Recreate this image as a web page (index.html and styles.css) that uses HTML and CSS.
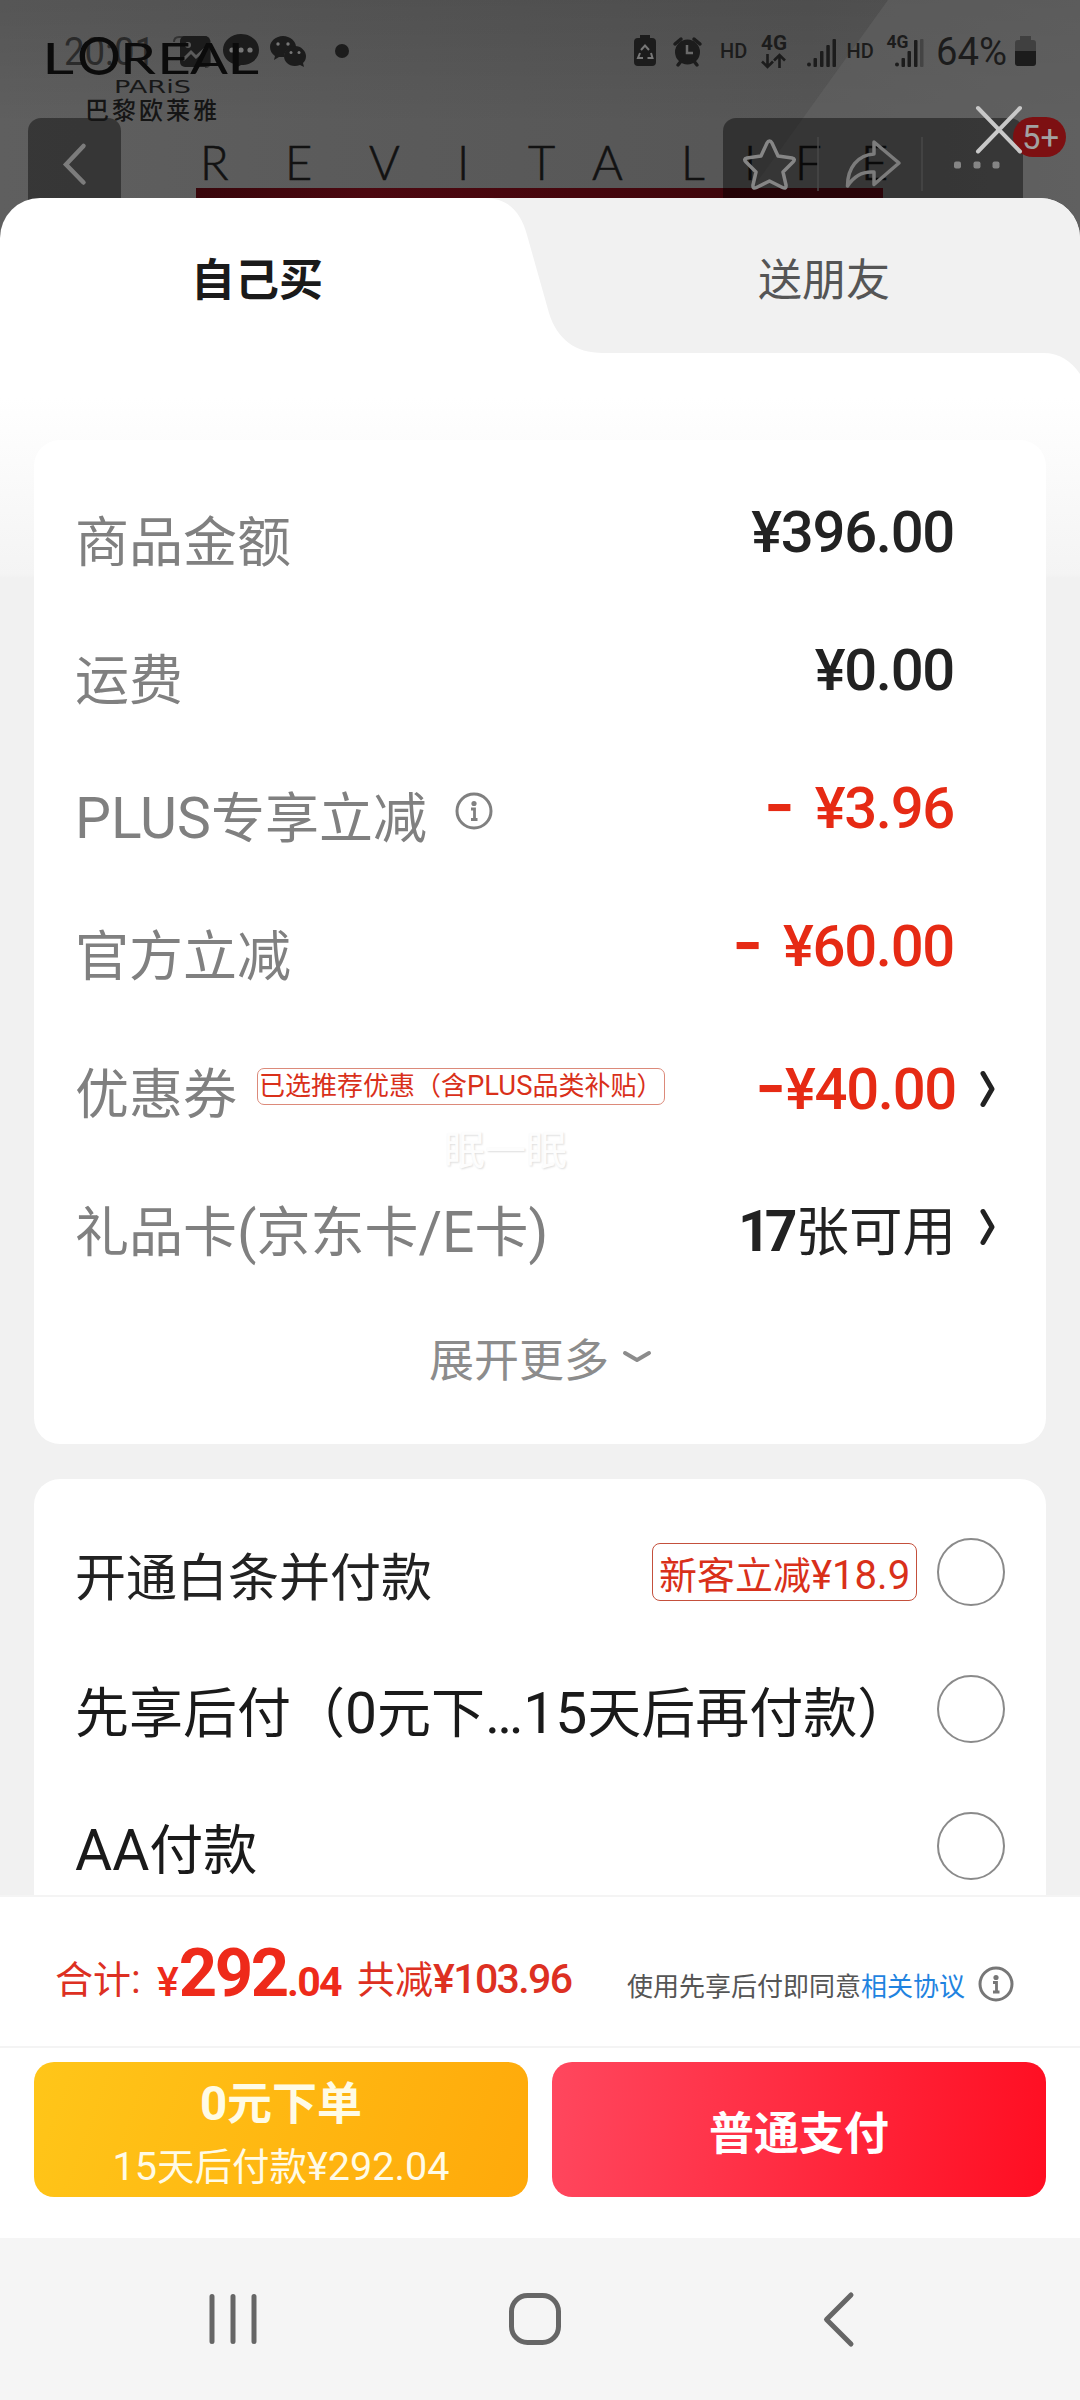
FILE: index.html
```html
<!DOCTYPE html>
<html lang="zh-CN">
<head>
<meta charset="utf-8">
<title>确认付款</title>
<link rel="stylesheet" href="styles.css">
</head>
<body>
<div class="screen">
  <svg class="poster" width="1080" height="250" viewBox="0 0 1080 250">
    <defs>
      <linearGradient id="wall" x1="0" y1="0" x2="1" y2="0"><stop offset="0" stop-color="#5f5f5f"/><stop offset=".3" stop-color="#5b5b5b"/><stop offset=".75" stop-color="#565656"/><stop offset="1" stop-color="#5c5c5c"/></linearGradient>
      <linearGradient id="shade" x1="0" y1="0" x2="0" y2="1"><stop offset="0" stop-color="#000" stop-opacity=".1"/><stop offset=".5" stop-color="#000" stop-opacity="0"/></linearGradient>
      <linearGradient id="band" x1="0" y1="0" x2="1" y2="0"><stop offset="0" stop-color="#38060b"/><stop offset=".25" stop-color="#4c0810"/><stop offset=".55" stop-color="#46060d"/><stop offset=".78" stop-color="#3f060c"/><stop offset="1" stop-color="#4a0810"/></linearGradient>
    </defs>
    <rect width="1080" height="250" fill="url(#wall)"/>
    <rect width="1080" height="250" fill="url(#shade)"/>
    <path d="M888 0H1080V250H708Z" fill="#636363" opacity=".6"/>
    <rect x="196" y="188" width="687" height="40" fill="url(#band)"/>
    <text class="poster-title" y="180" x="200 285 369 457 528 592 681 744 795 861">REVITALIFE</text>

    <!-- status bar -->
    <g fill="#1c1c1c">
      <text class="st-big" x="64" y="65" textLength="91" lengthAdjust="spacingAndGlyphs" opacity=".75">20:01</text>
      <path d="M174 42q0-5 5-5h24q7 0 7 7v18q0 5-5 5" fill="none" stroke="#333" stroke-width="2"/>
      <rect x="180" y="36" width="30" height="31" rx="5"/>
      <path d="M183 60l8-8 5 5 10-9" fill="none" stroke="#5b5b5b" stroke-width="3"/>
      <circle cx="188" cy="45" r="3" fill="#5b5b5b"/>
      <path d="M241 34c10 0 18 7 18 16s-8 15-18 15l-7 4v-5c-7-2-11-8-11-14 0-9 8-16 18-16z"/>
      <g fill="#777"><circle cx="232" cy="50" r="2.6"/><circle cx="241" cy="50" r="2.6"/><circle cx="250" cy="50" r="2.6"/></g>
      <path d="M283 36c7 0 13 5 13 11-7 0-12 4-12 10l-5 0-5 3 1-4c-3-2-5-5-5-9 0-6 6-11 13-11z"/>
      <path d="M295 46c6 0 11 5 11 10 0 3-1 5-3 7l1 4-4-2c-9 3-16-2-16-9 0-5 5-10 11-10z"/>
      <g fill="#777"><circle cx="278" cy="44" r="1.7"/><circle cx="288" cy="44" r="1.7"/><circle cx="291" cy="52.500" r="1.500"/><circle cx="299" cy="52.500" r="1.500"/></g>
      <circle cx="342" cy="51" r="7"/>
      <path d="M640 35h10v3h2q4 0 4 4v20q0 4-4 4h-14q-4 0-4-4v-20q0-4 4-4h2z"/>
      <path d="M641 50l4-4.500 4 4.500M651 53l1.500 5h-5M643 58h-5l2-5" fill="none" stroke="#777" stroke-width="2"/>
      <circle cx="687.500" cy="52" r="12.500"/>
      <path d="M675 44l6-5M700 44l-6-5M678 65l4-5M697 65l-4-5" stroke="#1c1c1c" stroke-width="3.500" stroke-linecap="round"/>
      <path d="M687 45v8h6" stroke="#6a6a6a" stroke-width="2.500" fill="none"/>
      <text class="st-hd" x="720" y="57.500">HD</text>
      <text class="st-4g" x="761" y="50" textLength="26" lengthAdjust="spacingAndGlyphs">4G</text>
      <path d="M767.500 54v12M762 61.500l5.500 5.500 5.500-5.500M779.500 68v-12M774 60.500l5.500-5.500 5.500 5.500" fill="none" stroke="#1c1c1c" stroke-width="2.600"/>
      <circle cx="809" cy="64.500" r="2"/>
      <rect x="813.500" y="58" width="3.500" height="9" rx="1"/><rect x="820" y="51" width="3.500" height="16" rx="1"/><rect x="826.300" y="45" width="3.500" height="22" rx="1"/><rect x="832.500" y="39" width="3.500" height="28" rx="1"/>
      <text class="st-hd" x="846.500" y="57.500">HD</text>
      <text class="st-4g small" x="886.500" y="48" textLength="22" lengthAdjust="spacingAndGlyphs">4G</text>
      <circle cx="897" cy="64.500" r="2"/>
      <rect x="901.500" y="58" width="3.500" height="9" rx="1"/><rect x="907.500" y="51" width="3.500" height="16" rx="1"/><rect x="914" y="40" width="3.500" height="27" rx="1"/><rect x="920" y="39" width="3.500" height="28" rx="1" fill="#444"/>
      <text class="st-big" x="936" y="65" textLength="71" lengthAdjust="spacingAndGlyphs">64%</text>
      <path d="M1020 36h11v4h2q3 0 3 3v8h-21v-8q0-3 3-3h2z" fill="#404040"/>
      <path d="M1015 51h21v12q0 3-3 3h-15q-3 0-3-3z"/>
    </g>

    <!-- brand mark -->
    <g fill="#0b0b0b">
      <text class="brand" y="74" x="42" textLength="32" lengthAdjust="spacingAndGlyphs">L</text>
      <text class="brand big-o" y="75" x="77" textLength="44" lengthAdjust="spacingAndGlyphs">O</text>
      <text class="brand" y="74" x="120" textLength="36" lengthAdjust="spacingAndGlyphs">R</text>
      <text class="brand" y="74" x="157" textLength="34" lengthAdjust="spacingAndGlyphs">E</text>
      <text class="brand" y="74" x="190" textLength="38" lengthAdjust="spacingAndGlyphs">A</text>
      <text class="brand" y="74" x="227" textLength="32" lengthAdjust="spacingAndGlyphs">L</text>
      <text class="brand-sub" y="93" x="114" textLength="77" lengthAdjust="spacingAndGlyphs">PARiS</text>
    </g>

    <!-- top controls -->
    <rect x="28" y="118" width="93" height="120" rx="13" fill="#000" fill-opacity=".42"/>
    <text class="brand-cn" x="85" y="119" fill="#151515">巴黎欧莱雅</text>
    <path d="M83.500 146L66 164.500l17.500 18" fill="none" stroke="#7c7c7c" stroke-width="4.500" stroke-linecap="round"/>
    <rect x="723" y="118" width="300" height="120" rx="13" fill="#000" fill-opacity=".42"/>
    <path d="M818 137v54M922 137v54" stroke="#484848" stroke-width="1.500"/>
    <path d="M769.500 141q1.500 0 2.500 2l6 13 14 2q4 .8 1 4l-10 10 3 13q.5 4.500-3.500 2.500l-13-6.500-13 6.500q-4 2-3.500-2.500l3-13-10-10q-3-3.200 1-4l14-2 6-13q1-2 2.500-2z" fill="none" stroke="#868686" stroke-width="3.500" stroke-linejoin="round"/>
    <path d="M874 142l25 21-25 21.500v-12.500c-12-1-20 4-26.500 14 0-18 10-31 26.500-32z" fill="none" stroke="#7c7c7c" stroke-width="3.500" stroke-linejoin="round"/>
    <g fill="#858585"><rect x="954" y="161.500" width="7" height="7" rx="2"/><rect x="973.500" y="161.500" width="7" height="7" rx="2"/><rect x="992.500" y="161.500" width="7" height="7" rx="2"/></g>
    <rect x="1013" y="117" width="53" height="40" rx="20" fill="#7d1012"/>
    <text class="badge-num" x="1022" y="149" textLength="37" lengthAdjust="spacingAndGlyphs">5+</text>
    <path d="M978 108l42 43.500M1020 108l-42 43.500" stroke="#c8c8c8" stroke-width="4" stroke-linecap="round"/>
  </svg>

  <main class="sheet">
    <svg class="tab-shape" width="1080" height="200" viewBox="0 0 1080 200">
      <path d="M485 0C508 0 521 14 527 37L549 115C557 141 575 155 603 155H1043C1060 155 1071 163 1080 176V0Z" fill="#f1f1f1"/>
    </svg>
    <nav class="tabs">
      <div class="tab active">自己买</div>
      <div class="tab gift">送朋友</div>
    </nav>

    <section class="card bill">
      <div class="row"><div class="label">商品金额</div><div class="amount up">¥396.00</div></div>
      <div class="row"><div class="label">运费</div><div class="amount up">¥0.00</div></div>
      <div class="row">
        <div class="label"><span class="lat">PLUS</span>专享立减</div>
        <svg class="info" width="38" height="38" viewBox="0 0 38 38"><circle cx="19" cy="19" r="17" fill="none" stroke="#808080" stroke-width="3"/><circle cx="19" cy="11.500" r="2.600" fill="#808080"/><path d="M16 17h3.500v10M16 27.500h6.500" fill="none" stroke="#808080" stroke-width="2.800"/></svg>
        <div class="amount up red"><span class="minus gap">-</span>¥3.96</div>
      </div>
      <div class="row"><div class="label">官方立减</div><div class="amount up red"><span class="minus gap">-</span>¥60.00</div></div>
      <div class="row">
        <div class="label">优惠券</div>
        <div class="coupon">已选推荐优惠（含<span class="lat">PLUS</span>品类补贴）</div>
        <div class="amount red"><span class="minus">-</span>¥40.00</div>
        <svg class="chev" width="16" height="40" viewBox="0 0 16 40"><path d="M3 4.500L12 20 3 35.500" fill="none" stroke="#222" stroke-width="5" stroke-linejoin="round" stroke-linecap="round"/></svg>
        <div class="watermark">眠一眠</div>
      </div>
      <div class="row">
        <div class="label">礼品卡<span class="lat">(</span>京东卡<span class="lat">/E</span>卡<span class="lat">)</span></div>
        <div class="cards"><span class="num">17</span>张可用</div>
        <svg class="chev" width="16" height="40" viewBox="0 0 16 40"><path d="M3 4.500L12 20 3 35.500" fill="none" stroke="#222" stroke-width="5" stroke-linejoin="round" stroke-linecap="round"/></svg>
      </div>
      <div class="more">展开更多<svg width="30" height="14" viewBox="0 0 30 14"><path d="M3 3l12 7 12-7" fill="none" stroke="#8c8c8c" stroke-width="4" stroke-linejoin="round" stroke-linecap="round"/></svg></div>
    </section>

    <section class="card pay">
      <div class="option"><div class="name small">开通白条并付款</div><div class="newbie">新客立减<span class="lat">¥18.9</span></div><span class="radio"></span></div>
      <div class="option"><div class="name">先享后付（<span class="lat">0</span>元下<span class="lat">…15</span>天后再付款）</div><span class="radio"></span></div>
      <div class="option"><div class="name"><span class="lat">AA</span>付款</div><span class="radio"></span></div>
    </section>
  </main>

  <div class="summary">
    <div class="total">合计<span class="lat">:</span></div>
    <div class="price"><span class="cur">¥</span><span class="int">292</span><span class="dec">.04</span></div>
    <div class="saved">共减<span class="saved-num">¥103.96</span></div>
    <div class="terms">使用先享后付即同意<a>相关协议</a></div>
    <svg class="terms-info" width="36" height="36" viewBox="0 0 36 36"><circle cx="18" cy="18" r="16" fill="none" stroke="#777" stroke-width="3"/><circle cx="18" cy="11.500" r="2.600" fill="#777"/><path d="M15 16.500h3.500v9M15 26h6.500" fill="none" stroke="#777" stroke-width="2.800"/></svg>
  </div>

  <div class="actions">
    <div class="btn later"><div class="btn-title"><span class="lat">0</span>元下单</div><div class="btn-sub"><span class="lat">15</span>天后付款<span class="lat">¥292.04</span></div></div>
    <div class="btn now"><div class="btn-title">普通支付</div></div>
  </div>

  <svg class="navbar" width="1080" height="162" viewBox="0 0 1080 162">
    <g fill="none" stroke="#666" stroke-width="5" stroke-linecap="round" stroke-linejoin="round">
      <path d="M212 58.500v45M233 58.500v45M254 58.500v45"/>
      <rect x="511.500" y="57.500" width="47" height="47" rx="16"/>
      <path d="M851 57l-24.500 24.500 24.500 24.500"/>
    </g>
  </svg>
</div>
</body>
</html>
```
FILE: styles.css
```css
* { box-sizing: border-box; }
body { margin: 0; background: #fff; }
.screen {
  position: relative;
  width: 1080px;
  height: 2400px;
  overflow: hidden;
  display: flex;
  flex-direction: column;
  font-family: "Noto Sans CJK SC", sans-serif;
  white-space: nowrap;
}
.lat { font-family: Roboto, sans-serif; font-size: 1.055em; line-height: 1; }

/* product page behind the sheet */
.poster { position: absolute; left: 0; top: 0; display: block; }
.poster-title { font: 300 47px Lato, sans-serif; fill: #121212; stroke: #121212; stroke-width: .6px; }
.st-big { font: 400 38px Roboto, sans-serif; }
.st-hd { font: 500 20px Roboto, sans-serif; }
.st-4g { font: 700 21px Roboto, sans-serif; }
.st-4g.small { font-size: 18px; }
.brand { font: 400 42px Lato, sans-serif; }
.brand.big-o { font-size: 53px; }
.brand-sub { font: 400 17px "DejaVu Sans", sans-serif; fill: #181818; }
.brand-cn { font: 500 24px "Noto Sans CJK SC", sans-serif; letter-spacing: 3px; }
.badge-num { font: 400 34px Roboto, sans-serif; fill: #a2a2a2; }

/* sheet */
.sheet {
  position: relative;
  margin-top: 198px;
  height: 1697px;
  overflow: hidden;
  border-radius: 40px 40px 0 0;
  background: linear-gradient(#fff 0, #fff 200px, #f4f4f4 376px, #f1f1f1 380px, #f1f1f1 100%);
}
.tab-shape { position: absolute; left: 0; top: 0; display: block; }
.tabs { position: relative; display: flex; height: 155px; margin-bottom: 87px; }
.tab { width: 514px; text-align: center; font-size: 44px; line-height: 158px; color: #1a1a1a; }
.tab.active { font-weight: 700; }
.tab.gift { width: 566px; padding-left: 54px; color: #555; }

.card { margin: 0 34px; background: #fff; border-radius: 26px; color: #222; }
.bill { height: 1004px; padding: 28px 42px 0 41px; margin-bottom: 35px; }
.row { position: relative; height: 138px; display: flex; align-items: center; }
.label { font-size: 54px; line-height: 80px; padding-top: 3px; color: #808080; }
.amount {
  margin-left: auto;
  margin-right: 50px;
  font: 500 58px/80px Roboto, sans-serif;
  letter-spacing: -1.3px;
  color: #222;
}
.chev { margin: -1px 8px 0 -24px; }
.amount.up { padding-bottom: 10px; }
.amount.red { color: #e62a14; }
.minus { font-family: Inter, sans-serif; font-size: 1.16em; font-weight: 600; line-height: 1; }
.minus.gap { margin-right: 21px; }
.info { margin: -4px 0 0 28px; }
.coupon {
  height: 37px;
  width: 408px;
  margin: -5px 0 0 20px;
  padding-left: 1px;
  border: 1px solid #dc8a7a;
  border-radius: 7px;
  font-size: 26px;
  line-height: 29px;
  color: #d9301a;
}
.watermark {
  position: absolute;
  left: 369px;
  top: 104px;
  font-size: 41px;
  line-height: 46px;
  color: #fdfdfd;
  text-shadow: 1px 1px 2px #dedede;
}
.cards { margin-left: auto; margin-right: 51px; padding-top: 2px; font-size: 53.5px; line-height: 80px; }
.num { font: 700 57px/1 Roboto, sans-serif; letter-spacing: -6px; margin-right: 4px; }
.more {
  height: 123px;
  padding-left: 2px;
  display: flex;
  justify-content: center;
  align-items: center;
  gap: 13px;
  font-size: 45px;
  color: #8c8c8c;
}
.more svg { margin-top: -2px; }
/* the chevron sits inside the column to the right of the amount */
.amount + .chev, .cards + .chev { margin-left: -26px; }
.cards + .chev { margin-left: -27px; }

.pay { height: 460px; padding: 24px 41px 0 41px; border-radius: 26px 26px 0 0; }
.option { height: 137px; display: flex; align-items: center; }
.name { font-size: 54px; line-height: 80px; padding-top: 3px; color: #1a1a1a; }
.name.small { font-size: 51px; padding-top: 4px; color: #222; }
.radio { width: 68px; height: 68px; border: 2px solid #8a8a8a; border-radius: 50%; margin-left: auto; }
.newbie {
  margin-left: auto;
  margin-right: -49px;
  width: 265px;
  height: 58px;
  padding-left: 6px;
  border: 1px solid #c4503c;
  border-radius: 8px;
  font-size: 38px;
  line-height: 57px;
  color: #d9301a;
}
.newbie + .radio { margin-left: 69px; }

/* totals */
.summary {
  height: 153px;
  border-top: 2px solid #f4f4f4;
  border-bottom: 2px solid #f4f4f4;
  background: #fff;
  display: flex;
  align-items: baseline;
  padding: 43px 0 0 55px;
  line-height: 60px;
  color: #dd3022;
}
.total { font-size: 38px; width: 102px; align-self: flex-start; margin-top: 7px; }
.price { font-family: Roboto, sans-serif; color: #ee2a1a; width: 200px; }
.cur { font-size: 41px; font-weight: 500; }
.int { font-size: 67px; font-weight: 700; letter-spacing: -2.400px; line-height: 1; }
.dec { font-size: 41px; font-weight: 700; letter-spacing: -1.600px; }
.saved { font-size: 38px; width: 270px; align-self: flex-start; margin-top: 7px; }
.saved-num { font: 500 41px/1 Roboto, sans-serif; letter-spacing: -1.600px; }
.terms { font-size: 26px; color: #555; }
.terms a { color: #1f83e0; }
.terms-info { align-self: flex-start; margin: 26px 0 0 13px; }

.actions { height: 190px; display: flex; gap: 24px; padding: 14px 34px 0; background: #fff; }
.btn {
  flex: 1;
  height: 135px;
  padding-top: 3px;
  border-radius: 20px;
  display: flex;
  flex-direction: column;
  align-items: center;
  justify-content: center;
  color: #fff;
}
.later { background: linear-gradient(110deg, #ffc619, #ffa90a); }
.now { background: linear-gradient(95deg, #ff475e, #ff0e22); }
.btn-title { font-size: 45px; font-weight: 700; line-height: 66px; }
.btn-sub { font-size: 37.500px; line-height: 60px; }
.later { color: #fffbe6; }
.navbar { display: block; background: #f5f5f5; }
```
